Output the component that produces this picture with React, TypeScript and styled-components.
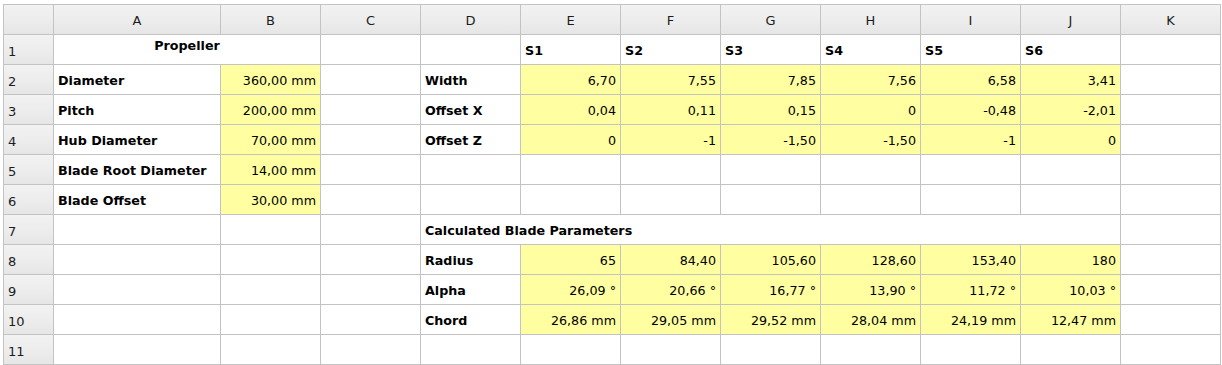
import React from "react";
import styled, { createGlobalStyle, css } from "styled-components";

const GlobalStyle = createGlobalStyle`
  html, body {
    margin: 0;
    padding: 0;
    background: #ffffff;
  }
  body {
    font-family: "DejaVu Sans", "Liberation Sans", sans-serif;
    font-size: 12.7px;
    color: #000;
  }
`;

const COLS = ["A", "B", "C", "D", "E", "F", "G", "H", "I", "J", "K"];
const COL_WIDTHS = [166, 99, 99, 99, 99, 99, 99, 99, 99, 99, 99];

const Frame = styled.div`
  padding: 4px 0 0 3px;
`;

const Sheet = styled.div`
  display: grid;
  grid-template-columns: 49px ${COL_WIDTHS.map((w) => `${w}px`).join(" ")};
  grid-auto-rows: 29px;
  gap: 1px;
  background: #c3c3c3;
  border: 1px solid #c3c3c3;
  width: max-content;
`;

const headerBg = css`
  background: linear-gradient(to bottom, #f2f2f2 0%, #ececec 60%, #e6e6e6 100%);
  color: #1c1c1c;
`;

const Corner = styled.div`
  ${headerBg}
`;

const ColHeader = styled.div`
  ${headerBg}
  display: flex;
  align-items: center;
  justify-content: center;
  padding-top: 1px;
  font-size: 13px;
`;

const RowHeader = styled.div`
  ${headerBg}
  display: flex;
  align-items: center;
  padding: 4px 0 0 4px;
  box-sizing: border-box;
  font-size: 13px;
`;

type Align = "left" | "right" | "center";

const Cell = styled.div<{ $bold?: boolean; $align?: Align; $fill?: boolean; $span?: number; $top?: boolean }>`
  display: flex;
  align-items: ${(p) => (p.$top ? "flex-start" : "center")};
  justify-content: ${(p) =>
    p.$align === "right" ? "flex-end" : p.$align === "center" ? "center" : "flex-start"};
  padding: ${(p) => (p.$top ? "3px 4px 0 4px" : "1px 4px 0 4px")};
  box-sizing: border-box;
  white-space: nowrap;
  overflow: hidden;
  font-weight: ${(p) => (p.$bold ? 700 : 400)};
  background: ${(p) => (p.$fill ? "#ffffa1" : "#ffffff")};
  grid-column: span ${(p) => p.$span ?? 1};
`;

type CellData = {
  text?: string;
  bold?: boolean;
  align?: Align;
  fill?: boolean;
  span?: number;
  top?: boolean;
};

const blank = (n: number): CellData[] => Array.from({ length: n }, () => ({}));
const label = (text: string): CellData => ({ text, bold: true });
const vals = (list: string[]): CellData[] => list.map((text) => ({ text, fill: true, align: "right" }));

const rows: CellData[][] = [
  [
    { text: "Propeller", bold: true, align: "center", span: 2, top: true },
    ...blank(2),
    ...["S1", "S2", "S3", "S4", "S5", "S6"].map(label),
    {},
  ],
  [label("Diameter"), ...vals(["360,00 mm"]), {}, label("Width"), ...vals(["6,70", "7,55", "7,85", "7,56", "6,58", "3,41"]), {}],
  [label("Pitch"), ...vals(["200,00 mm"]), {}, label("Offset X"), ...vals(["0,04", "0,11", "0,15", "0", "-0,48", "-2,01"]), {}],
  [label("Hub Diameter"), ...vals(["70,00 mm"]), {}, label("Offset Z"), ...vals(["0", "-1", "-1,50", "-1,50", "-1", "0"]), {}],
  [label("Blade Root Diameter"), ...vals(["14,00 mm"]), ...blank(9)],
  [label("Blade Offset"), ...vals(["30,00 mm"]), ...blank(9)],
  [...blank(3), { text: "Calculated Blade Parameters", bold: true, span: 7 }, {}],
  [...blank(3), label("Radius"), ...vals(["65", "84,40", "105,60", "128,60", "153,40", "180"]), {}],
  [...blank(3), label("Alpha"), ...vals(["26,09 °", "20,66 °", "16,77 °", "13,90 °", "11,72 °", "10,03 °"]), {}],
  [...blank(3), label("Chord"), ...vals(["26,86 mm", "29,05 mm", "29,52 mm", "28,04 mm", "24,19 mm", "12,47 mm"]), {}],
  blank(11),
];

export default function App() {
  return (
    <>
      <GlobalStyle />
      <Frame>
        <Sheet>
          <Corner />
          {COLS.map((c) => (
            <ColHeader key={c}>{c}</ColHeader>
          ))}
          {rows.map((row, r) => (
            <React.Fragment key={r}>
              <RowHeader>{r + 1}</RowHeader>
              {row.map((cell, i) => (
                <Cell
                  key={i}
                  $bold={cell.bold}
                  $align={cell.align}
                  $fill={cell.fill}
                  $span={cell.span}
                  $top={cell.top}
                >
                  {cell.text}
                </Cell>
              ))}
            </React.Fragment>
          ))}
        </Sheet>
      </Frame>
    </>
  );
}
